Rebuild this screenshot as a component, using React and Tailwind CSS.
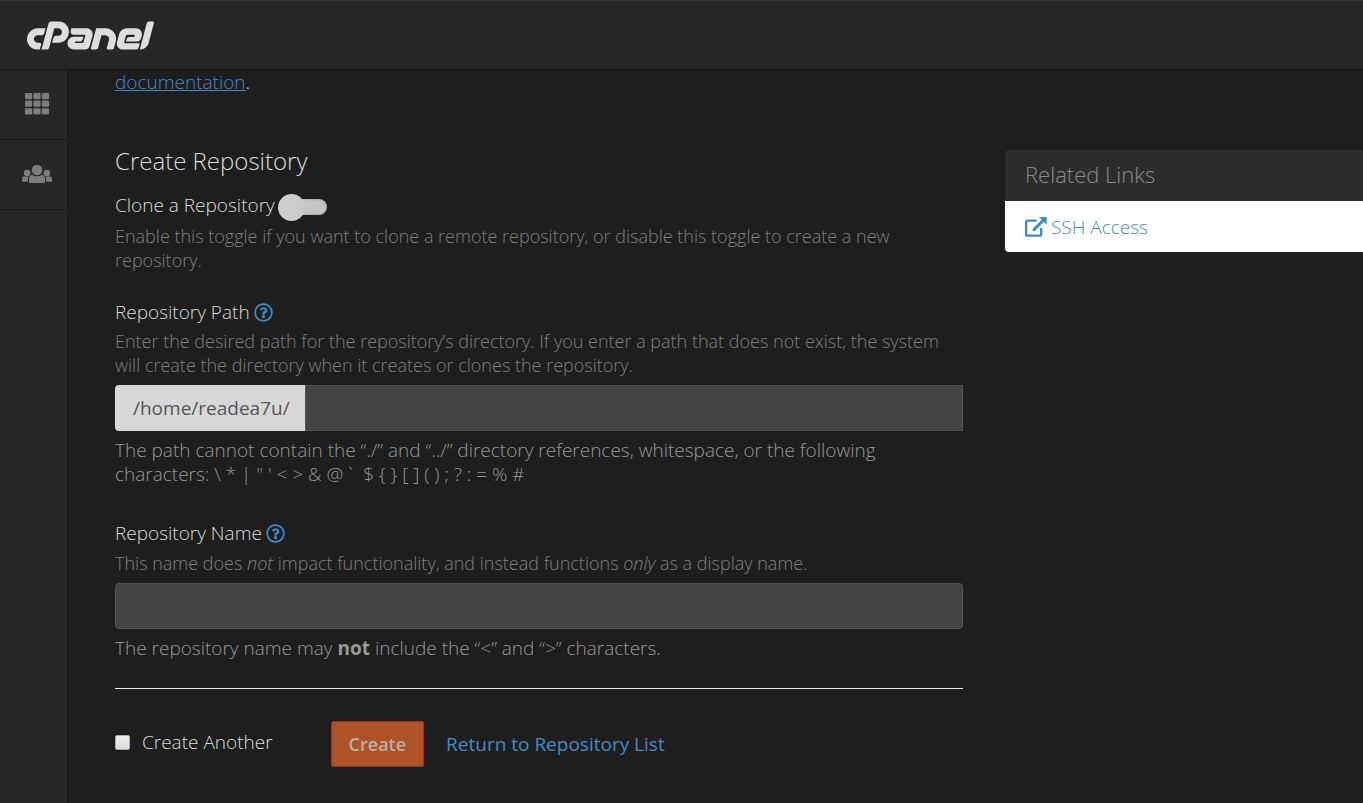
import { FaRegQuestionCircle } from "react-icons/fa";
import { SiCpanel } from "react-icons/si";

const PATH_RULES =
  "The path cannot contain the “./” and “../” directory references, whitespace, or the following characters: \\ * | \" ' < > & @ ` \u00a0$ { } [ ] ( ) ; ? : = % #";

function GridIcon() {
  return (
    <svg width="24" height="22" viewBox="0 0 24 22" fill="currentColor" aria-hidden="true">
      {[0, 7.6, 15.2].map((y) =>
        [0, 8.4, 16.8].map((x) => <rect key={`${x}-${y}`} x={x} y={y} width="7.2" height="6.2" rx="1.1" />)
      )}
    </svg>
  );
}

function UsersIcon() {
  return (
    <svg width="30" height="18" viewBox="0 0 90 54" fill="currentColor" aria-hidden="true">
      <circle cx="45" cy="15" r="15.5" />
      <path d="M21 54V43c0-8 4-14 10-14 4 3 8 5 14 5s10-2 14-5c6 0 10 6 10 14v11z" />
      <circle cx="15.5" cy="24" r="10" />
      <circle cx="74.5" cy="24" r="10" />
      <path d="M0 50v-8c0-5 3-8 7-8 3 2 10 2 13 0-1 3-2 6-2 9v7zM90 50v-8c0-5-3-8-7-8-3 2-10 2-13 0 1 3 2 6 2 9v7z" />
    </svg>
  );
}

function ExternalLinkIcon() {
  return (
    <svg width="22" height="20" viewBox="0 0 66 60" fill="none" stroke="currentColor" aria-hidden="true">
      <path d="M35 11H6.500a3 3 0 0 0-3 3v39a3 3 0 0 0 3 3h39a3 3 0 0 0 3-3V33" strokeWidth="7" />
      <path d="M27 38L54 11" strokeWidth="9" strokeLinecap="round" />
      <path d="M42 0h23v23z" fill="currentColor" stroke="none" />
    </svg>
  );
}

function NavItem({ label, children }) {
  return (
    <a
      href="#"
      aria-label={label}
      className="flex h-[70px] items-center justify-center border-b border-[#181818] pb-0.5 pl-1.5 text-[#7d7d7d]"
    >
      {children}
    </a>
  );
}

function HelpButton({ label }) {
  return (
    <button type="button" aria-label={label} className="text-[#428bca]">
      <FaRegQuestionCircle size={19} />
    </button>
  );
}

export default function App() {
  return (
    <div className="flex min-h-screen flex-col bg-[#1e1e1e] font-['Open_Sans',sans-serif] text-[19px] leading-6 font-light text-[#dcdcdc]">
      <header className="flex h-[70px] items-center border-t border-b border-t-[#33373b] border-b-[#181818] bg-[#272727] pl-[27px]">
        <a href="#" aria-label="cPanel" className="flex h-8 items-center overflow-hidden text-[#dedede]">
          <SiCpanel size={127} />
        </a>
      </header>

      <div className="flex flex-1">
        <nav className="w-[68px] shrink-0 border-r border-[#181818] bg-[#272727]">
          <NavItem label="Tools">
            <GridIcon />
          </NavItem>
          <NavItem label="User Manager">
            <UsersIcon />
          </NavItem>
        </nav>

        <div className="flex flex-1 items-start gap-[42px] pl-[47px]">
          <main className="flex-1">
            <p>
              <a href="#" className="text-[#428bca] underline">documentation</a>.
            </p>

            <form onSubmit={(e) => e.preventDefault()}>
              <h2 className="mt-[51px] text-[24px] leading-8">Create Repository</h2>

              <section className="mt-4">
                <div className="flex items-start gap-[3px]">
                  <label htmlFor="clone">Clone a Repository</label>
                  <span className="relative flex h-7 w-[49px] items-center">
                    <input
                      id="clone"
                      type="checkbox"
                      role="switch"
                      className="ml-2 h-4 w-[41px] appearance-none rounded-full bg-[#c6c6c6] shadow-[inset_0_0_3px_rgba(0,0,0,0.3)]"
                    />
                    <span className="pointer-events-none absolute left-0 size-[27px] rounded-full bg-[#cccccc]" />
                  </span>
                </div>
                <p className="mt-[3px] text-[18px] text-[#808080]">
                  Enable this toggle if you want to clone a remote repository, or disable this toggle to create a new
                  repository.
                </p>
              </section>

              <section className="mt-7">
                <div className="flex items-center gap-1">
                  <label htmlFor="path">Repository Path</label>
                  <HelpButton label="About the repository path" />
                </div>
                <p className="mt-[5px] text-[18px] text-[#808080]">
                  Enter the desired path for the repository’s directory. If you enter a path that does not exist, the
                  system will create the directory when it creates or clones the repository.
                </p>
                <div className="mt-2 flex h-[46px]">
                  <span className="flex items-center rounded-l bg-[#d8d8d8] pr-[15px] pl-[18px] font-normal text-[#555]">
                    /home/readea7u/
                  </span>
                  <input id="path" type="text" className="min-w-0 flex-1 border border-[#555] bg-[#444] px-4" />
                </div>
                <p className="mt-[7px] text-[#999]">{PATH_RULES}</p>
              </section>

              <section className="mt-[35px]">
                <div className="flex items-center gap-1">
                  <label htmlFor="name">Repository Name</label>
                  <HelpButton label="About the repository name" />
                </div>
                <p className="mt-1.5 text-[18px] text-[#808080]">
                  This name does <em>not</em> impact functionality, and instead functions <em>only</em> as a display
                  name.
                </p>
                <input
                  id="name"
                  type="text"
                  className="mt-2 block h-[46px] w-full rounded border border-[#555] bg-[#444] px-4"
                />
                <p className="mt-[7px] text-[#999]">
                  The repository name may <strong className="font-bold">not</strong> include the “&lt;” and “&gt;”
                  characters.
                </p>
              </section>

              <hr className="mt-7 border-[#eee]" />

              <div className="mt-8 flex items-center">
                <div className="flex items-center gap-3 pb-1">
                  <input
                    id="another"
                    type="checkbox"
                    className="size-[15px] appearance-none rounded-xs border border-[#aaa] bg-linear-to-b from-[#eee] to-[#dcdcdc]"
                  />
                  <label htmlFor="another">Create Another</label>
                </div>
                <button
                  type="submit"
                  className="ml-[58px] h-[46px] rounded-xs border border-[#98350f] bg-[#b05227] px-[17px] text-[18px] font-semibold text-[#b8b0ac]"
                >
                  Create
                </button>
                <a href="#" className="ml-[22px] font-normal text-[#428bca]">Return to Repository List</a>
              </div>
            </form>
          </main>

          <aside className="mt-20 w-[358px] shrink-0 overflow-hidden rounded-l">
            <h3 className="bg-[#2c2c2c] px-5 pt-3 pb-3.5 text-[22px] leading-[25px] text-[#8c8c8c]">Related Links</h3>
            <div className="bg-white px-5 pt-3.5 pb-[13px]">
              <a href="#" className="flex items-center gap-1 text-[#428bca]">
                <ExternalLinkIcon />
                SSH Access
              </a>
            </div>
          </aside>
        </div>
      </div>
    </div>
  );
}
